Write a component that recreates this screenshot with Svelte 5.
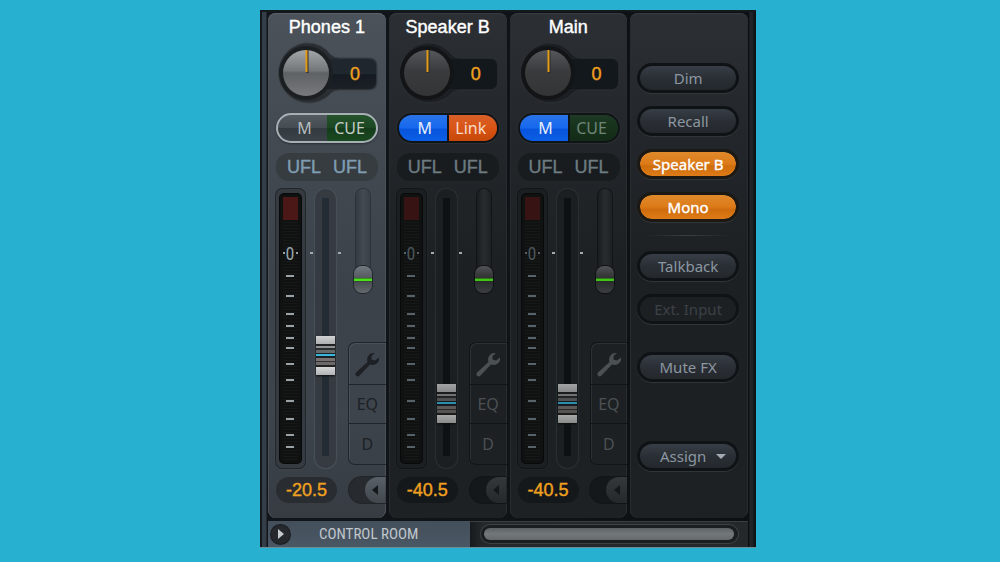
<script>
  let channels = $state([
    { name: 'Phones 1', pan: 0, gain: '-20.5', level: 38, trim: 0, mute: false, cue: true, side: 'CUE', selected: true },
    { name: 'Speaker B', pan: 0, gain: '-40.5', level: 17, trim: 0, mute: true, cue: true, side: 'Link', selected: false },
    { name: 'Main', pan: 0, gain: '-40.5', level: 17, trim: 0, mute: true, cue: false, side: 'CUE', selected: false }
  ]);

  let master = $state([
    { label: 'Dim', on: false },
    { label: 'Recall', on: false },
    { label: 'Speaker B', on: true },
    { label: 'Mono', on: true }
  ]);

  const ticks = [82, 102, 120, 132, 144, 154, 170, 186, 207, 225, 241, 253];
</script>

<svg class="defs" width="0" height="0" aria-hidden="true">
  <defs>
    <linearGradient id="knob-light" x1="0" y1="0" x2="0" y2="1">
      <stop offset="0" stop-color="#a3a6a8" />
      <stop offset="0.45" stop-color="#747779" />
      <stop offset="0.5" stop-color="#5f6264" />
      <stop offset="1" stop-color="#77797b" />
    </linearGradient>
    <linearGradient id="knob-dark" x1="0" y1="0" x2="0" y2="1">
      <stop offset="0" stop-color="#55585b" />
      <stop offset="0.45" stop-color="#393b3d" />
      <stop offset="1" stop-color="#323436" />
    </linearGradient>
    <linearGradient id="display" x1="0" y1="0" x2="0" y2="1">
      <stop offset="0" stop-color="#20262d" />
      <stop offset="0.5" stop-color="#1f272f" />
      <stop offset="0.52" stop-color="#151b21" />
      <stop offset="1" stop-color="#1a2026" />
    </linearGradient>
  </defs>
</svg>

<main class="mixer">
  <div class="strips">
    {#each channels as ch}
      <section class="strip" class:selected={ch.selected}>
        <h2>{ch.name}</h2>

        <div class="pan">
          <svg class="pan-art" viewBox="0 0 102 62" aria-hidden="true">
            <path class="ring" d="M30 1a30 30 0 0 1 25 12q3 3 8 3h30q8 0 8 8v16q0 8-8 8H63q-5 0-8 3A30 30 0 1 1 30 1Z" />
            <rect class="display" x="40" y="17" width="60" height="30" rx="7" />
            <circle class="well" cx="30" cy="31" r="27" />
            <circle cx="30" cy="31" r="23" fill={ch.selected ? 'url(#knob-light)' : 'url(#knob-dark)'} />
            <path d="M31.5 8v23" stroke="#2a2a28" stroke-width="2" />
            <path d="M30.5 8v22" stroke="#e39b18" stroke-width="2" />
          </svg>
          <input class="pan-knob" type="range" min="-100" max="100" bind:value={ch.pan} aria-label="{ch.name} pan" />
          <output class="pan-value">{ch.pan}</output>
        </div>

        <div class="toggles">
          <button class="mute" class:on={ch.mute} aria-pressed={ch.mute} onclick={() => (ch.mute = !ch.mute)}>M</button>
          <button
            class="cue"
            class:link={ch.side === 'Link'}
            class:on={ch.cue}
            aria-pressed={ch.cue}
            onclick={() => (ch.cue = !ch.cue)}>{ch.side}</button>
        </div>

        <div class="peaks"><span>UFL</span><span>UFL</span></div>

        <div class="body">
          <div class="meter">
            <svg viewBox="0 0 21 269" width="21" height="269" aria-hidden="true">
              <rect class="over" x="3" y="3" width="15" height="23" />
              {#each Array(80) as _, n}
                <rect x="3" y={28 + n * 3} width="15" height="1" fill="#fff" opacity="0.03" />
              {/each}
              <text class="zero" x="10" y="66" text-anchor="middle">0</text>
              <path class="tick" d="M3 59h2M16 59h2" />
              {#each ticks as y}
                <path class="tick" d="M6 {y}h8" />
              {/each}
            </svg>
          </div>

          <div class="fader">
            <input type="range" min="0" max="100" bind:value={ch.level} aria-label="{ch.name} volume" />
          </div>

          <div class="side">
            <div class="trim">
              <input type="range" min="0" max="100" bind:value={ch.trim} aria-label="{ch.name} trim" />
            </div>
            <div class="tools">
              <button aria-label="Settings">
                <svg width="28" height="28" viewBox="0 0 28 28" aria-hidden="true">
                  <path d="M3.500 26 Q1.500 24.500 3 22.500 L14.500 12 Q13 7 17 4 Q19 2.500 22 3 L18.500 6 L18.500 9.500 L22 10.500 L26 7.500 Q26.500 12 23 14 Q20 15.500 17 14.500 L6.500 25.500 Q5 27 3.500 26Z" />
                </svg>
              </button>
              <button>EQ</button>
              <button>D</button>
            </div>
          </div>
        </div>

        <div class="bottom">
          <input class="gain" type="text" bind:value={ch.gain} aria-label="{ch.name} gain" />
          <div class="expand">
            <button aria-label="Expand {ch.name}">
              <svg width="8" height="10" viewBox="0 0 8 10" aria-hidden="true"><path d="M7 0v10L1 5Z" /></svg>
            </button>
          </div>
        </div>
      </section>
    {/each}

    <section class="strip master">
      {#each master as item}
        <button class="pill" class:on={item.on} aria-pressed={item.on} onclick={() => (item.on = !item.on)}>{item.label}</button>
      {/each}
      <hr />
      <button class="pill">Talkback</button>
      <button class="pill" disabled>Ext. Input</button>
      <button class="pill mute-fx">Mute FX</button>
      <div class="assign">
        <select class="pill" aria-label="Assign">
          <option>Assign</option>
        </select>
      </div>
    </section>
  </div>

  <footer>
    <div class="room">
      <button class="play" aria-label="Collapse control room">
        <svg width="8" height="10" viewBox="0 0 8 10" aria-hidden="true"><path d="M1 0v10L7 5Z" /></svg>
      </button>
      <span>CONTROL ROOM</span>
    </div>
    <div class="scroll">
      <div class="track"><div class="thumb"></div></div>
    </div>
  </footer>
</main>

<style>
  :global(body) {
    margin: 0;
    background: #28b0d1;
  }

  :global(#app) {
    padding-top: 10px;
  }

  .defs {
    position: absolute;
  }

  .mixer {
    margin: 0 24.4% 0 26%;
    padding: 3px 8px 0 8px;
    border-bottom: 1px solid #6f8c95;
    background: linear-gradient(90deg, #14181c 2px, #343e49 2px, #343e49 6px, #12161a 7px, #0d1013 calc(100% - 7px), #22272b calc(100% - 6px), #1b2024 calc(100% - 3px), #101417 calc(100% - 2px));
    box-shadow: inset 0 2px #14191d;
    box-sizing: border-box;
    font-family: 'Noto Sans', 'Open Sans', sans-serif;
    font-size: 16px;
  }

  button,
  input,
  select {
    font: inherit;
    margin: 0;
    padding: 0;
    border: none;
    box-sizing: border-box;
  }

  .strips {
    display: grid;
    grid-template-columns: repeat(4, minmax(0, 1fr));
    gap: 3px;
  }

  .strip {
    --edge: #2b3034;
    --frame: #1b1f22;
    --line: #121518;
    --text: #4b5053;
    --tick: #56636a;
    --zero: #49555a;
    --slot: #0e1114;
    --well: #14181b;
    box-sizing: border-box;
    padding: 0 0 15px 8px;
    border-radius: 8px;
    background: linear-gradient(#2c3035, #23272b 120px, #1c2023 260px, #1d2124);
    box-shadow: inset 0 1px #363b40, inset 1px 0 #272c30, inset -1px 0 #272c30;
  }

  .strip.selected {
    --edge: #4a5259;
    --frame: #363b41;
    --line: #20252a;
    --text: #1d2125;
    --tick: #9aa3a8;
    --zero: #94a3a9;
    --slot: #232b34;
    --well: #272b2f;
    background: linear-gradient(#4b5259, #434a52 120px, #3b4249 280px, #3d444b 400px, #363c42);
    box-shadow: inset 0 1px #59626b, inset 1px 0 #4a5158, inset -1px 0 #4a5158;
  }

  h2 {
    margin: 0 8px 0 0;
    font: 18px/29px 'Liberation Sans', Arial, sans-serif;
    text-align: center;
    color: #fff;
    -webkit-text-stroke: 0.4px #fff;
  }

  .pan {
    position: relative;
    display: flex;
    justify-content: flex-end;
    align-items: center;
    width: 102px;
    height: 62px;
  }

  .pan-art {
    position: absolute;
    inset: 0;
  }

  .ring {
    fill: #1c2024;
    stroke: #2b3035;
  }

  .selected .ring {
    fill: #2a2e33;
    stroke: #383d43;
  }

  .display {
    fill: #13181d;
  }

  .selected .display {
    fill: url(#display);
  }

  .well {
    fill: #121416;
  }

  .selected .well {
    fill: #1c1f22;
  }

  .pan-knob {
    position: absolute;
    left: 0;
    top: 0;
    width: 62px;
    height: 62px;
    opacity: 0;
  }

  .pan-value {
    position: relative;
    width: 46px;
    padding-top: 2px;
    text-align: center;
    font: 18px/20px 'Liberation Sans', Arial, sans-serif;
    color: #f0a020;
    -webkit-text-stroke: 0.4px #f0a020;
  }

  .toggles {
    display: flex;
    gap: 2px;
    width: 102px;
    height: 30px;
    margin-top: 9px;
    padding: 2px;
    box-sizing: border-box;
    border-radius: 15px;
    background: #101417;
    box-shadow: 0 0 0 1px #2b2f32;
  }

  .selected .toggles {
    gap: 0;
    background: #a6b0b4;
    box-shadow: 0 1px 2px #2a2f34;
  }

  .toggles button {
    flex: 1 1 0;
    line-height: 24px;
    color: #6f8478;
  }

  .toggles .mute {
    padding-left: 4px;
  }

  .mute {
    border-radius: 13px 0 0 13px;
    background: linear-gradient(#535b61, #444b51 50%, #343b40 52%, #3c4348);
  }

  .mute.on {
    background: linear-gradient(#2b74e8, #1668ee 50%, #0755dc 55%, #0b5fe6);
  }

  .toggles .mute {
    color: #b4babd;
  }

  .toggles .mute.on {
    color: #e6eefb;
  }

  .cue {
    border-radius: 0 13px 13px 0;
    background: linear-gradient(#1e3a24, #17321b 50%, #132b17);
  }

  .cue.on {
    background: linear-gradient(#24532c, #1b4722 50%, #143c1a 52%, #1a4a21);
  }

  .toggles .cue.on {
    color: #c3ccc5;
  }

  .toggles .cue {
    padding-right: 4px;
  }

  .cue.link.on {
    background: linear-gradient(#d9602a, #d95415 50%, #c64808);
  }

  .toggles .cue.link.on {
    color: #f6dccb;
  }

  .peaks {
    display: flex;
    justify-content: center;
    gap: 12px;
    width: 102px;
    height: 28px;
    margin-top: 10px;
    border-radius: 13px;
    background: #191c1f;
    font: 18px/28px 'Liberation Sans', Arial, sans-serif;
    color: #6c7b80;
    -webkit-text-stroke: 0.4px #6c7b80;
  }

  .selected .peaks {
    background: #373c41;
    color: #7f9eb4;
    -webkit-text-stroke: 0.4px #7f9eb4;
  }

  .body {
    display: flex;
    height: 279px;
    margin-top: 8px;
  }

  .meter {
    width: 29px;
    padding: 5px 4px;
    box-sizing: border-box;
    border-radius: 6px;
    background: var(--frame);
    box-shadow: 0 0 0 1px var(--line), 0 0 2px 1px var(--edge);
  }

  .meter svg {
    display: block;
    border-radius: 4px;
    background: #101111;
    box-shadow: 0 0 0 1px #08090a;
  }

  .over {
    fill: #371314;
  }

  .selected .over {
    fill: #4b1717;
  }

  .tick {
    stroke: var(--tick);
    stroke-width: 2;
  }

  .zero {
    font: 18px 'Liberation Sans Narrow', 'Roboto Condensed', 'Liberation Sans', sans-serif;
    fill: var(--zero);
  }

  .fader {
    position: relative;
    width: 21px;
    margin-left: 10px;
    padding: 5px 0;
    box-sizing: border-box;
    border-radius: 10px;
    background: var(--frame);
    box-shadow: 0 0 1px 1px var(--edge);
  }

  .fader::before,
  .fader::after {
    content: '';
    position: absolute;
    top: 63px;
    left: -5px;
    width: 3px;
    height: 2px;
    background: #a3abae;
  }

  .fader::after {
    left: 23px;
  }

  input[type='range'] {
    appearance: none;
  }

  .fader input {
    display: block;
    width: 21px;
    height: 268px;
    writing-mode: vertical-lr;
    direction: rtl;
    background: linear-gradient(var(--slot), var(--slot)) center 4px / 7px 258px no-repeat;
  }

  .fader input::-webkit-slider-thumb {
    appearance: none;
    width: 19px;
    height: 39px;
    background: linear-gradient(
      #d0d1d1, #aeb0b1 8px, #222 8px, #222 10px, #8f9293 10px, #8f9293 12px,
      #2b2d2e 12px, #2b2d2e 14px, #66696a 14px, #66696a 17px, #1b2226 17px, #1b2226 18px,
      #39b6dc 18px, #39b6dc 20px, #1b2226 20px, #1b2226 22px, #777172 22px, #777172 25px,
      #333 25px, #333 26px, #6e6a6b 26px, #6e6a6b 29px, #222 29px, #222 31px, #d6d7d7 31px, #b1b2b3
    );
    box-shadow: 0 1px 2px #0d0f11;
  }

  .strip:not(.selected) .fader input::-webkit-slider-thumb {
    filter: brightness(0.78);
  }

  .side {
    flex: 1;
    display: flex;
    flex-direction: column;
    justify-content: space-between;
    margin-left: 12px;
    padding-bottom: 3px;
  }

  .trim {
    align-self: center;
    width: 14px;
    height: 104px;
    margin-right: 7px;
    border-radius: 7px;
    background: linear-gradient(90deg, #1a1d1f, #292c2f, #1e2123);
    box-shadow: 0 0 0 1px var(--line);
  }

  .selected .trim {
    background: linear-gradient(90deg, #343a40, #444a51, #3a4046);
    box-shadow: 0 0 0 1px #2e3339;
  }

  .trim input {
    display: block;
    width: 18px;
    height: 104px;
    margin: 0 -2px;
    writing-mode: vertical-lr;
    direction: rtl;
    background: none;
  }

  .trim input::-webkit-slider-thumb {
    appearance: none;
    width: 18px;
    height: 27px;
    border-radius: 8px;
    background: linear-gradient(#505254, #2f3133 12px, #173010 12px, #43c21a 13px, #43c21a 15px, #1f3518 15px, #2a2c2d 16px, #3b3e40);
    box-shadow: 0 0 0 1px #0e1113;
  }

  .selected .trim input::-webkit-slider-thumb {
    background: linear-gradient(#737a7f, #53595e 12px, #1f4a12 12px, #4be01a 13px, #4be01a 15px, #2c4326 15px, #474c50 16px, #62686c);
    box-shadow: 0 0 0 1px #22272b;
  }

  .tools {
    display: grid;
    grid-template-rows: 41px 39px 41px;
    border: 1px solid var(--line);
    border-right: none;
    border-radius: 7px 0 0 7px;
    box-shadow: inset 1px 1px var(--edge);
  }

  .tools button {
    background: none;
    color: var(--text);
    line-height: 20px;
  }

  .tools button + button {
    border-top: 1px solid var(--line);
  }

  .tools svg {
    display: block;
    margin: 0 auto;
    fill: var(--text);
  }

  .bottom {
    display: flex;
    justify-content: space-between;
    height: 26px;
    margin-top: 9px;
  }

  .gain {
    width: 61px;
    height: 26px;
    border-radius: 13px;
    background: #15181b;
    text-align: center;
    font: 18px/26px 'Liberation Sans', Arial, sans-serif;
    color: #f0a020;
    -webkit-text-stroke: 0.4px #f0a020;
  }

  .selected .gain {
    background: #292d31;
  }

  .expand {
    display: flex;
    justify-content: flex-end;
    width: 37px;
    border-radius: 13px 0 0 13px;
    background: var(--well);
    box-shadow: 0 0 0 1px var(--line);
    clip-path: inset(-1px 0 -1px -1px);
  }

  .expand button {
    width: 21px;
    border-radius: 13px 0 0 13px;
    background: linear-gradient(#34383b, #26292c);
  }

  .selected .expand button {
    background: linear-gradient(#596067, #41474d);
  }

  .expand svg {
    display: block;
    margin: 0 auto;
    fill: #15181b;
  }

  .master {
    display: flex;
    flex-direction: column;
    gap: 13px;
    padding: 50px 9px 0 7px;
    font-size: 15px;
  }

  .pill {
    width: 100%;
    height: 30px;
    flex: none;
    border: 3px solid #101315;
    border-radius: 15px;
    background: linear-gradient(#383e46, #2a2f35 50%, #24282d);
    box-shadow: 0 1px 1px #33383b;
    line-height: 22px;
    text-align: center;
    color: #8c97a1;
  }

  .pill.on {
    border-color: #1c1814;
    background: linear-gradient(#e08a2c, #dc7a18 50%, #cf6c0c 60%, #dd7c18) padding-box;
    color: #fff;
    -webkit-text-stroke: 0.4px #fff;
  }

  .pill:disabled {
    background: #1d2023;
    color: #3b4147;
  }

  hr {
    width: 82px;
    height: 1px;
    margin: 0 auto 2px;
    border: none;
    background: linear-gradient(90deg, transparent, #3b4044, transparent);
  }

  .mute-fx {
    margin-top: 15px;
  }

  .assign {
    position: relative;
    margin-top: 46px;
  }

  .assign::after {
    content: '';
    position: absolute;
    right: 13px;
    top: 13px;
    border: 5px solid transparent;
    border-top-color: #a2abb1;
    border-bottom: none;
  }

  .assign select {
    display: block;
    appearance: none;
    padding-right: 10px;
  }

  footer {
    display: grid;
    grid-template-columns: 42fr 58fr;
    height: 26px;
    margin-top: 3px;
  }

  .room {
    display: flex;
    align-items: center;
    padding-left: 3px;
    background: linear-gradient(#434f5b, #4a5764);
    font-family: 'Liberation Sans Narrow', 'Roboto Condensed', 'Liberation Sans', sans-serif;
    font-size: 15px;
    color: #c0c7cc;
  }

  .room span {
    margin-left: 29px;
    white-space: nowrap;
  }

  .play {
    width: 19px;
    height: 19px;
    border-radius: 50%;
    background: #25292d;
    box-shadow: 0 0 0 1px #1a1d20;
  }

  .play svg {
    display: block;
    margin: 0 auto;
    fill: #c3cad0;
  }

  .scroll {
    display: flex;
    align-items: center;
    padding: 0 10px 0 11px;
    background: linear-gradient(90deg, #171a1d, #24282b 12px);
    box-shadow: inset 0 1px #3a3f43;
  }

  .track {
    flex: 1;
    padding: 3px 4px 3px 3px;
    border-radius: 10px;
    background: #1b1e21;
    box-shadow: 0 0 0 1px #3d4246;
  }

  .thumb {
    height: 12px;
    border-radius: 6px;
    background: linear-gradient(#5d6264, #73787a 50%, #65696b);
  }
</style>
